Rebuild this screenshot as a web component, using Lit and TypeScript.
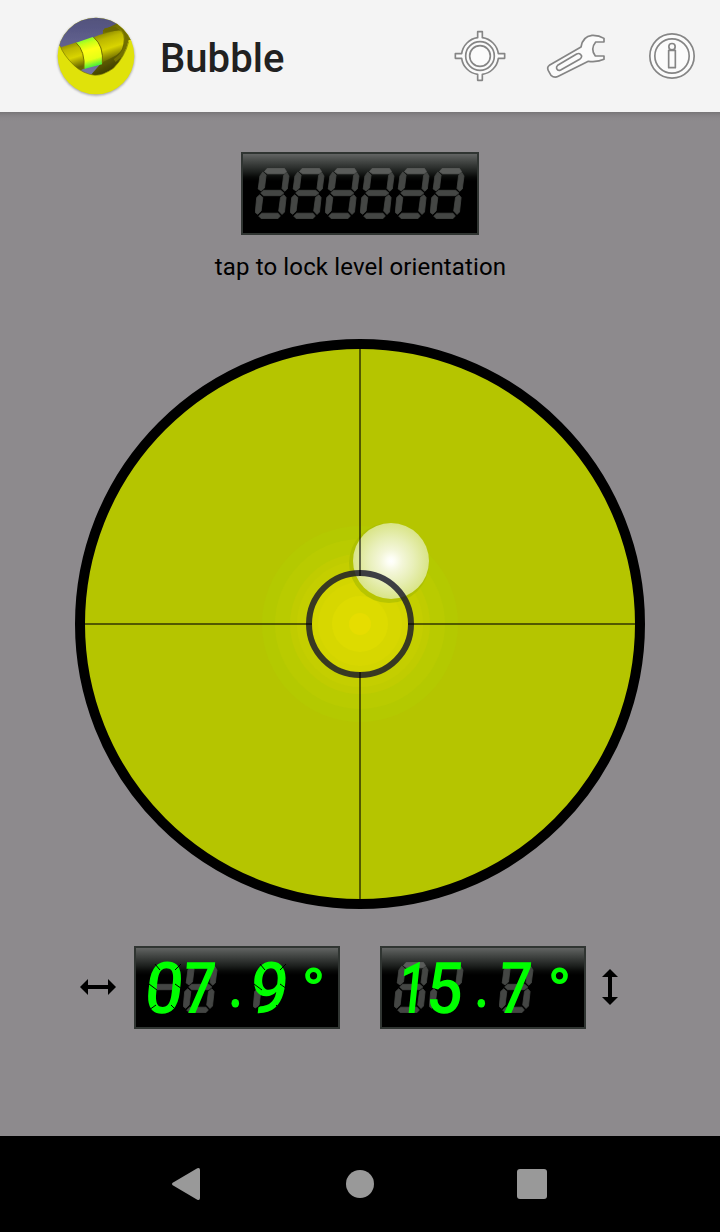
import { LitElement, html, css, svg } from "lit";
import { customElement, property } from "lit/decorators.js";

// Lamp order: top, upper right, upper left, middle, lower left, lower right, bottom.
const LAMPS = [
  "9.5,3.5 12.3,0.3 29.3,0.3 31.5,3.5 29,5.8 12.5,5.8",
  "31.7,4.3 34,8 32.3,21 29.6,23.3 27,20.5 28.6,7.5",
  "7.8,4 11.1,7 9.5,20 6.2,23 3.2,21 4.9,8",
  "5.7,25 8.7,22.3 25.7,22.3 28.8,25 25.7,27.7 8.5,27.7",
  "4.7,26.8 7.8,29.5 6.1,43 2.7,46.3 0.3,44.5 1.7,29.5",
  "28.8,26.8 31.1,29.5 29.5,44 27,46.5 23.7,43 25.5,29.5",
  "3.7,48 6.7,45.2 23,45.2 25.3,48 22.8,50.7 6.3,50.7",
];

// Lamps that stay visible behind each lit character.
const IDLE: Record<string, number[]> = {
  "": [0, 1, 2, 3, 4, 5, 6],
  "0": [3],
  "1": [0, 1, 2, 3, 4, 5, 6],
  "5": [1, 4],
  "7": [1, 2, 3, 4, 5, 6],
  "9": [4],
};

/** LCD panel: unlit lamps behind, the reading as text in front. */
@customElement("lcd-panel")
class LcdPanel extends LitElement {
  @property() value = "";
  @property({ type: Number }) cells = 6;

  static styles = css`
    :host { display: block; }
    .panel {
      box-sizing: border-box;
      height: 83px;
      padding: 14px 12px 0;
      border: 2px solid #303532;
      background: linear-gradient(#626463 0, #4d504e 5px, #363937 11px, #1c1f1d 18px, #080908 23px, #000 27px);
      display: grid;
      grid-template-columns: repeat(var(--cells), 35px);
    }
    .wide { padding-right: 15px; }
    .cell { display: grid; height: 51px; width: 35px; }
    .cell > * { grid-area: 1 / 1; }
    .lamps { fill: #444644; stroke: #444644; stroke-width: 0.8; width: 35px; height: 51px; }
    .lamps .top { fill: #5a5c5a; stroke: #5a5c5a; }
    .gaps { width: 35px; height: 51px; stroke: #000; stroke-width: 1; fill: none; z-index: 1; }
    .char {
      color: #00ff00;
      font: 500 71.5px/51px Roboto, sans-serif;
      width: 35px;
      white-space: nowrap;
      display: flex;
      justify-content: center;
      transform: translateX(-1px) skewX(-6deg) scaleX(0.94);
      margin-top: 0.5px;
    }
    .five { transform: translateX(-1.5px) skewX(-4deg) scaleX(0.9); }
    .seven { transform: translateX(-1px) skewX(-4deg) scaleX(0.8); }
    .one { transform: translateX(1px) skewX(-6deg) scaleX(0.7); }
    .dot { transform: scaleX(0.85); font-size: 64px; margin-top: -2px; }
    .deg { transform: none; font: 900 61px/51px Roboto, sans-serif; margin: 3px 0 0 8px; }
  `;

  private kind(c: string) {
    return { ".": "dot", "°": "deg", "7": "seven", "1": "one", "5": "five" }[c] ?? "";
  }

  render() {
    const chars = Array.from({ length: this.cells }, (_, i) => this.value[i] ?? "");
    return html`<div class="panel ${this.value ? "wide" : ""}" style="--cells:${this.cells}">
      ${chars.map((c) => html`<div class="cell">
        ${IDLE[c] ? html`<svg class="lamps" viewBox="0 0 35 51">${IDLE[c].map((i) => svg`<polygon class=${i ? "" : "top"} points=${LAMPS[i]}></polygon>`)}</svg>` : ""}
        ${c ? html`<span class="char ${this.kind(c)}">${c}</span>` : ""}
        ${c === "0" || c === "9" ? html`<svg class="gaps" viewBox="0 0 35 51"><path d="M1 22L9 28M27 22L34 27M7 2L12 8M33 2L27 8M1 48L8 43M23 43L29 49"/></svg>` : ""}
      </div>`)}
    </div>`;
  }
}

@customElement("app-root")
class AppRoot extends LitElement {
  static styles = css`
    :host {
      display: flex;
      flex-direction: column;
      width: 720px;
      height: 1232px;
      background: #8d8a8d;
      font-family: Roboto, sans-serif;
      overflow: hidden;
    }
    svg { display: block; }
    .bar {
      flex: none;
      box-sizing: border-box;
      height: 112px;
      padding: 0 23px 0 55px;
      display: flex;
      align-items: center;
      background: #f4f4f4;
    }
    .title {
      margin: 6px auto 0 23px;
      font: 500 40px/48px Roboto, sans-serif;
      letter-spacing: 0.05px;
      color: #212121;
    }
    .tool { fill: #fbfbfb; stroke: #858585; stroke-width: 5; stroke-linejoin: round; }
    .aim { margin-right: 38px; }
    .wrench { margin-right: 40px; margin-bottom: 1px; }
    main {
      flex: 1;
      display: flex;
      flex-direction: column;
      align-items: center;
      padding-top: 40px;
      box-sizing: border-box;
      background: linear-gradient(#777577 0, #858285 3px, #8b888b 6px, #8d8a8d 9px);
    }
    .hint {
      margin: 18px 0 0 1px;
      font-size: 24px;
      line-height: 28px;
      letter-spacing: 0.14px;
      color: #000;
      white-space: nowrap;
    }
    .level { margin-top: 58px; flex: none; }
    .readings {
      margin-top: 37px;
      width: 550px;
      margin-right: 12px;
      display: flex;
      align-items: center;
    }
    .across { margin: 0 17px 2px 0; }
    .along { margin: 0 0 2px 5px; }
    .pair { display: flex; gap: 40px; }
    .nav {
      flex: none;
      height: 96px;
      background: #000;
      display: flex;
      gap: 143px;
      align-items: center;
      padding-left: 171px;
    }
    .nav svg { fill: #999; }
    .home { margin-left: 2px; }
    .recent { margin-left: -0px; }
  `;

  render() {
    const glow = [
      [98, "#b4c900"], [85, "#b9cb00"], [70, "#c0cc00"], [63, "#c4ce00"],
      [54, "#cbd100"], [48, "#d3d500"], [42, "#d7d700"], [28, "#dddb00"], [11, "#e6dd00"],
    ];
    return html`
      <header class="bar">
        <svg width="82" height="83" viewBox="45 45 246 249">
          <defs>
            <clipPath id="disc"><circle cx="168" cy="168" r="115"/></clipPath>
            <clipPath id="lens"><path d="M45 40H291V120L266 120Q255 170 220 205Q190 226 165 226Q130 222 103 197Q70 165 60 137L45 137Z"/></clipPath>
            <linearGradient id="sky" x2="0" y2="1"><stop stop-color="#50507a"/><stop offset="1" stop-color="#7474a8"/></linearGradient>
            <linearGradient id="tube" x1="0" x2=".3" y2="1"><stop stop-color="#686500"/><stop offset=".35" stop-color="#bcb700"/><stop offset=".65" stop-color="#d9d400"/><stop offset="1" stop-color="#696600"/></linearGradient>
            <linearGradient id="fluid" x1="0" x2=".25" y2="1"><stop stop-color="#42f93f"/><stop offset=".28" stop-color="#c6ff18"/><stop offset=".5" stop-color="#ffff18"/><stop offset=".8" stop-color="#e6ff15"/><stop offset="1" stop-color="#55f238"/></linearGradient>
            <linearGradient id="case" x2=".4" y2="1"><stop stop-color="#353500"/><stop offset=".4" stop-color="#939000"/><stop offset="1" stop-color="#343400"/></linearGradient>
            <filter id="soft"><feGaussianBlur stdDeviation="3"/></filter>
            <filter id="smooth"><feGaussianBlur stdDeviation="1.5"/></filter>
          </defs>
          <circle cx="168" cy="171" r="116" fill="#777" opacity=".6" filter="url(#soft)"/>
          <g clip-path="url(#disc)">
            <rect x="45" y="45" width="246" height="249" fill="#e0e20a"/>
            <g clip-path="url(#lens)" filter="url(#smooth)">
              <rect x="45" y="45" width="246" height="190" fill="url(#sky)"/>
              <path d="M189 90L233 70Q268 77 276 119L265 160L218 230H148L183 190Z" fill="url(#case)"/>
              <path d="M45 147L110 127Q134 145 133 205L115 215L45 180Z" fill="url(#tube)"/>
              <path d="M161 112Q178 103 203 98L235 90Q256 98 250 132Q246 162 215 173L185 188Q192 145 161 112Z" fill="url(#tube)"/>
              <path d="M108 128L158 111Q190 132 186 193L132 207Q136 153 108 128Z" fill="url(#fluid)"/>
              <path d="M108 128Q136 153 132 207M161 112Q192 138 187 190" fill="none" stroke="#777300" stroke-width="3"/>
              <path d="M193 85L226 80L241 91L194 97Z" fill="#6c6900"/>
              <path d="M236 78Q259 91 261 120Q261 155 224 182" fill="none" stroke="#737000" stroke-width="10"/>
            </g>
            <path d="M60 137Q70 165 103 197Q130 222 165 226Q190 226 220 205Q255 170 266 125" fill="none" stroke="#777500" stroke-width="2"/>
          </g>
        </svg>
        <div class="title">Bubble</div>
        <svg class="tool aim" width="54" height="54" viewBox="39 57 162 162">
          <path d="M113 83V65H127V83A56 56 0 0 1 175 131H194V145H175A56 56 0 0 1 127 193V211H113V193A56 56 0 0 1 65 145H46V131H65A56 56 0 0 1 113 83Z"/>
          <circle cx="120" cy="138" r="43"/><circle cx="120" cy="138" r="31"/>
        </svg>
        <svg class="tool wrench" width="62" height="48" viewBox="315 65 186 144">
          <path d="M328 165L423 110Q428 78 456 75Q476 74 492 84V95H467Q450 116 466 137H492V147Q474 156 445 153L355 198Q343 204 333 195L325 181Q320 171 328 165Z"/>
          <path d="M353 165L410 131Q420 126 425 137Q425 143 419 147L362 179Q354 183 350 175Q348 169 353 165Z"/>
        </svg>
        <svg class="tool" width="50" height="54" viewBox="621 57 150 162">
          <circle cx="696" cy="138" r="66.5"/><circle cx="696" cy="138" r="51.5"/>
          <circle cx="696" cy="110" r="9.5"/><path d="M686 121H706V173H686Z"/>
        </svg>
      </header>
      <main>
        <lcd-panel .cells=${6}></lcd-panel>
        <p class="hint">tap to lock level orientation</p>
        <svg class="level" width="570" height="570" viewBox="75 339 570 570">
          <defs><radialGradient id="air">
            <stop stop-color="#fff"/><stop offset=".1" stop-color="#fdfef4"/><stop offset=".3" stop-color="#f3f6d8"/>
            <stop offset=".6" stop-color="#e8efb8"/><stop offset="1" stop-color="#d9e487"/>
          </radialGradient></defs>
          <circle cx="360" cy="624" r="280" fill="#b5c500" stroke="#000" stroke-width="10"/>
          ${glow.map(([r, c]) => svg`<circle cx="360" cy="624" r=${r} fill=${c}></circle>`)}
          <circle cx="389" cy="563" r="40" fill="#a8bc00" opacity=".65"/>
          <circle cx="391" cy="561" r="38" fill="url(#air)"/>
          <circle cx="360" cy="624" r="51" fill="none" stroke="#17172a" stroke-width="6" opacity=".82"/>
          <path d="M359 349h2v227h-2zM359 672h2v227h-2zM85 623h227v2H85zM408 623h227v2H408z" fill="#000" opacity=".55"/>
        </svg>
        <div class="readings">
          <svg class="across" width="38" height="38" viewBox="-19 -19 38 38"><path d="M-18 0L-10 -8V-2H10V-8L18 0L10 8V2H-10V8Z"/></svg>
          <div class="pair">
            <lcd-panel .cells=${5} value="07.9°"></lcd-panel>
            <lcd-panel .cells=${5} value="15.7°"></lcd-panel>
          </div>
          <svg class="along" width="38" height="38" viewBox="-19 -19 38 38"><path transform="rotate(90)" d="M-18 0L-10 -8V-2H10V-8L18 0L10 8V2H-10V8Z"/></svg>
        </div>
      </main>
      <nav class="nav">
        <svg width="30" height="34" viewBox="0 0 30 34"><path d="M1.7 15.8L26.3 1.3Q29 .3 29 3V31Q29 33.7 26.3 32.7L1.7 18.2Q0 17 1.7 15.8Z"/></svg>
        <svg class="home" width="28" height="28" viewBox="0 0 28 28"><circle cx="14" cy="14" r="14"/></svg>
        <svg class="recent" width="30" height="30" viewBox="0 0 30 30"><rect width="30" height="30" rx="3"/></svg>
      </nav>`;
  }
}
